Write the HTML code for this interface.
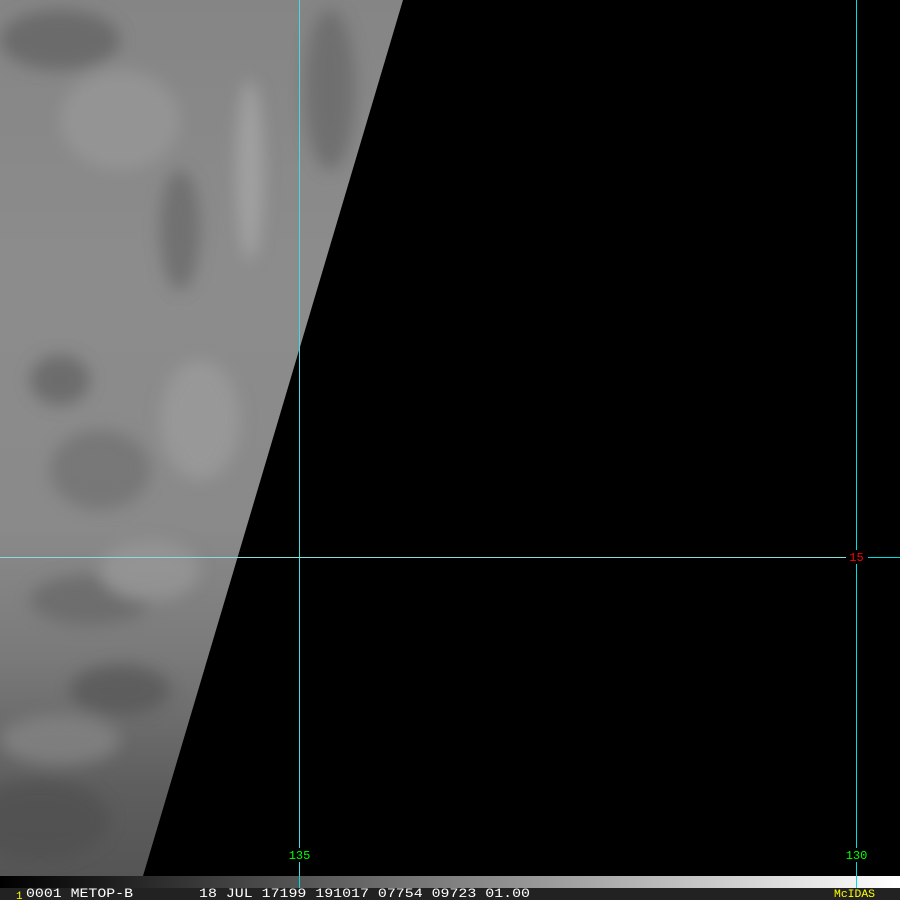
<!DOCTYPE html>
<html><head><meta charset="utf-8"><style>
html,body{margin:0;padding:0;background:#000;width:900px;height:900px;overflow:hidden}
svg{display:block}
</style></head><body>
<svg width="900" height="900" xmlns="http://www.w3.org/2000/svg">
<defs>
<linearGradient id="base" x1="0" y1="0" x2="0" y2="1">
<stop offset="0" stop-color="#858585"/>
<stop offset="0.3" stop-color="#8c8c8c"/>
<stop offset="0.6" stop-color="#8a8a8a"/>
<stop offset="0.75" stop-color="#7a7a7a"/>
<stop offset="0.9" stop-color="#5e5e5e"/>
<stop offset="1" stop-color="#555"/>
</linearGradient>
<linearGradient id="bar" x1="0" y1="0" x2="1" y2="0">
<stop offset="0" stop-color="#000"/>
<stop offset="1" stop-color="#fff"/>
</linearGradient>
<filter id="bl"><feGaussianBlur stdDeviation="8"/></filter>
<clipPath id="cp"><polygon points="0,0 403,0 143,876 0,876"/></clipPath>
</defs>
<rect width="900" height="900" fill="#000"/>
<g clip-path="url(#cp)">
<rect width="410" height="876" fill="url(#base)"/>
<g filter="url(#bl)" opacity="0.7">
<ellipse cx="60" cy="40" rx="60" ry="30" fill="#606060"/>
<ellipse cx="330" cy="90" rx="25" ry="80" fill="#666"/>
<ellipse cx="250" cy="170" rx="14" ry="90" fill="#aaa"/>
<ellipse cx="180" cy="230" rx="20" ry="60" fill="#666"/>
<ellipse cx="120" cy="120" rx="60" ry="50" fill="#9a9a9a"/>
<ellipse cx="60" cy="380" rx="30" ry="25" fill="#606060"/>
<ellipse cx="200" cy="420" rx="40" ry="60" fill="#9e9e9e"/>
<ellipse cx="100" cy="470" rx="50" ry="40" fill="#707070"/>
<ellipse cx="90" cy="600" rx="60" ry="25" fill="#666"/>
<ellipse cx="150" cy="570" rx="50" ry="30" fill="#9a9a9a"/>
<ellipse cx="120" cy="690" rx="50" ry="25" fill="#555"/>
<ellipse cx="60" cy="740" rx="60" ry="25" fill="#888"/>
<ellipse cx="40" cy="820" rx="70" ry="40" fill="#505050"/>
</g>
</g>
<line x1="299.5" y1="0" x2="299.5" y2="888" stroke="#4dd" stroke-width="1"/>
<line x1="856.5" y1="0" x2="856.5" y2="888" stroke="#0dd" stroke-width="1"/>
<line x1="0" y1="557.5" x2="846" y2="557.5" stroke="#8dd" stroke-width="1"/>
<line x1="868" y1="557.5" x2="900" y2="557.5" stroke="#0dd" stroke-width="1"/>
<rect x="849" y="550" width="15" height="14" fill="#000"/>
<text x="856.5" y="561" fill="#f00" font-family="Liberation Mono, monospace" font-size="12" text-anchor="middle">15</text>
<rect x="288" y="848" width="24" height="14" fill="#000"/>
<rect x="845" y="848" width="24" height="14" fill="#000"/>
<text x="299.5" y="859" fill="#0f0" font-family="Liberation Mono, monospace" font-size="12" text-anchor="middle">135</text>
<text x="856.5" y="859" fill="#0f0" font-family="Liberation Mono, monospace" font-size="12" text-anchor="middle">130</text>
<rect x="0" y="876" width="900" height="12" fill="url(#bar)"/>
<line x1="299.5" y1="876" x2="299.5" y2="888" stroke="#0dd"/>
<line x1="856.5" y1="876" x2="856.5" y2="888" stroke="#0dd"/>
<rect x="0" y="888" width="900" height="12" fill="#222"/>
<text x="16" y="899" fill="#ff0" font-family="Liberation Mono, monospace" font-size="11">1</text>
<text x="26" y="897" fill="#fff" font-family="Liberation Mono, monospace" font-size="13" textLength="107" lengthAdjust="spacingAndGlyphs">0001 METOP-B</text>
<text x="199" y="897" fill="#fff" font-family="Liberation Mono, monospace" font-size="13" textLength="331" lengthAdjust="spacingAndGlyphs">18 JUL 17199 191017 07754 09723 01.00</text>
<text x="834" y="897" fill="#ff0" font-family="Liberation Mono, monospace" font-size="11" textLength="41" lengthAdjust="spacingAndGlyphs">McIDAS</text>
</svg>
</body></html>
